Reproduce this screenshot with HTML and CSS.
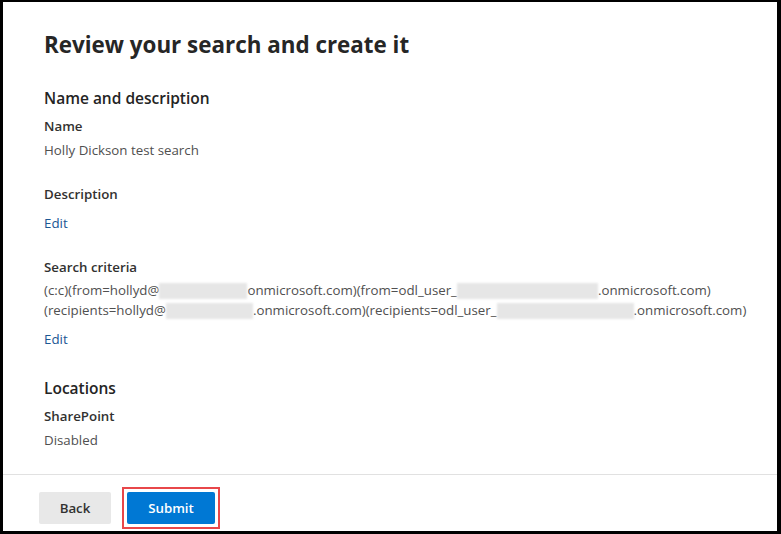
FILE: index.html
```html
<!DOCTYPE html>
<html lang="en">
<head>
<meta charset="utf-8">
<title>Review your search and create it</title>
<link rel="stylesheet" href="styles.css">
</head>
<body>
<div class="frame">
  <main class="content">
    <h1 class="title">Review your search and create it</h1>

    <section class="group group-first">
      <h2 class="group-title">Name and description</h2>
      <div class="field">
        <div class="label">Name</div>
        <div class="value">Holly Dickson test search</div>
      </div>
      <div class="field">
        <div class="label">Description</div>
        <a class="edit" href="#">Edit</a>
      </div>
      <div class="field">
        <div class="label">Search criteria</div>
        <div class="value criteria">
          <div>(c:c)(from=hollyd@<span class="blur blur-1"></span>onmicrosoft.com)(from=odl_user_<span class="blur blur-2"></span>.onmicrosoft.com)</div>
          <div>(recipients=hollyd@<span class="blur blur-3"></span>.onmicrosoft.com)(recipients=odl_user_<span class="blur blur-4"></span>.onmicrosoft.com)</div>
        </div>
        <a class="edit" href="#">Edit</a>
      </div>
    </section>

    <section class="group group-next">
      <h2 class="group-title">Locations</h2>
      <div class="field">
        <div class="label">SharePoint</div>
        <div class="value">Disabled</div>
      </div>
    </section>
  </main>

  <footer class="footer">
    <button class="btn btn-secondary" type="button">Back</button>
    <span class="highlight"><button class="btn btn-primary" type="button">Submit</button></span>
  </footer>
</div>
</body>
</html>
```

FILE: styles.css
```css
* { box-sizing: border-box; }
html, body { margin: 0; padding: 0; background: #000; }
body {
  width: 781px;
  height: 534px;
  font-family: "Open Sans", "Noto Sans", "Liberation Sans", sans-serif;
  color: #323130;
  overflow: hidden;
}
.frame {
  margin: 2px 4px 0 3px;
  width: 774px;
  height: 529px;
  background: #fff;
  display: flex;
  flex-direction: column;
}
.content {
  flex: 1;
  padding: 27px 0 0 41px;
}
.title {
  margin: 0;
  font-size: 22.4px;
  font-weight: 700;
  line-height: 32px;
  color: #262626;
}
.group-first { margin-top: 26px; }
.group-next { margin-top: 28px; }
.group-title {
  margin: 0;
  font-size: 15.5px;
  font-weight: 600;
  line-height: 22px;
  color: #242424;
}
.field { margin-top: 7px; }
.field + .field { margin-top: 24px; }
.label {
  font-size: 13.3px;
  font-weight: 600;
  line-height: 20px;
  color: #323130;
}
.value {
  margin-top: 4px;
  font-size: 13.3px;
  line-height: 20px;
  color: #505050;
}
.criteria { margin-top: 3px; }
.criteria div { white-space: nowrap; }
.blur {
  display: inline-block;
  height: 16px;
  vertical-align: -4px;
  background: #e6e6e6;
  filter: blur(1px);
}
.blur-1 { width: 88px; }
.blur-2 { width: 141px; }
.blur-3 { width: 87px; }
.blur-4 { width: 137px; }
.edit {
  display: inline-block;
  margin-top: 9px;
  font-size: 13.3px;
  line-height: 20px;
  color: #1b5794;
  text-decoration: none;
}
.footer {
  height: 57px;
  border-top: 1px solid #e1e1e1;
  display: flex;
  align-items: flex-start;
  padding: 17px 0 0 36px;
  gap: 11px;
}
.btn {
  height: 32px;
  border: none;
  border-radius: 2px;
  font-family: inherit;
  font-size: 13.3px;
  font-weight: 600;
  padding: 0 20px;
  cursor: pointer;
}
.btn-secondary {
  width: 72px;
  background: #e8e8e8;
  color: #323130;
}
.highlight {
  margin-top: -5px;
  padding: 3px;
  border: 2px solid #e8474a;
  display: inline-flex;
}
.btn-primary {
  width: 88px;
  background: #0078d4;
  color: #fff;
}
```
